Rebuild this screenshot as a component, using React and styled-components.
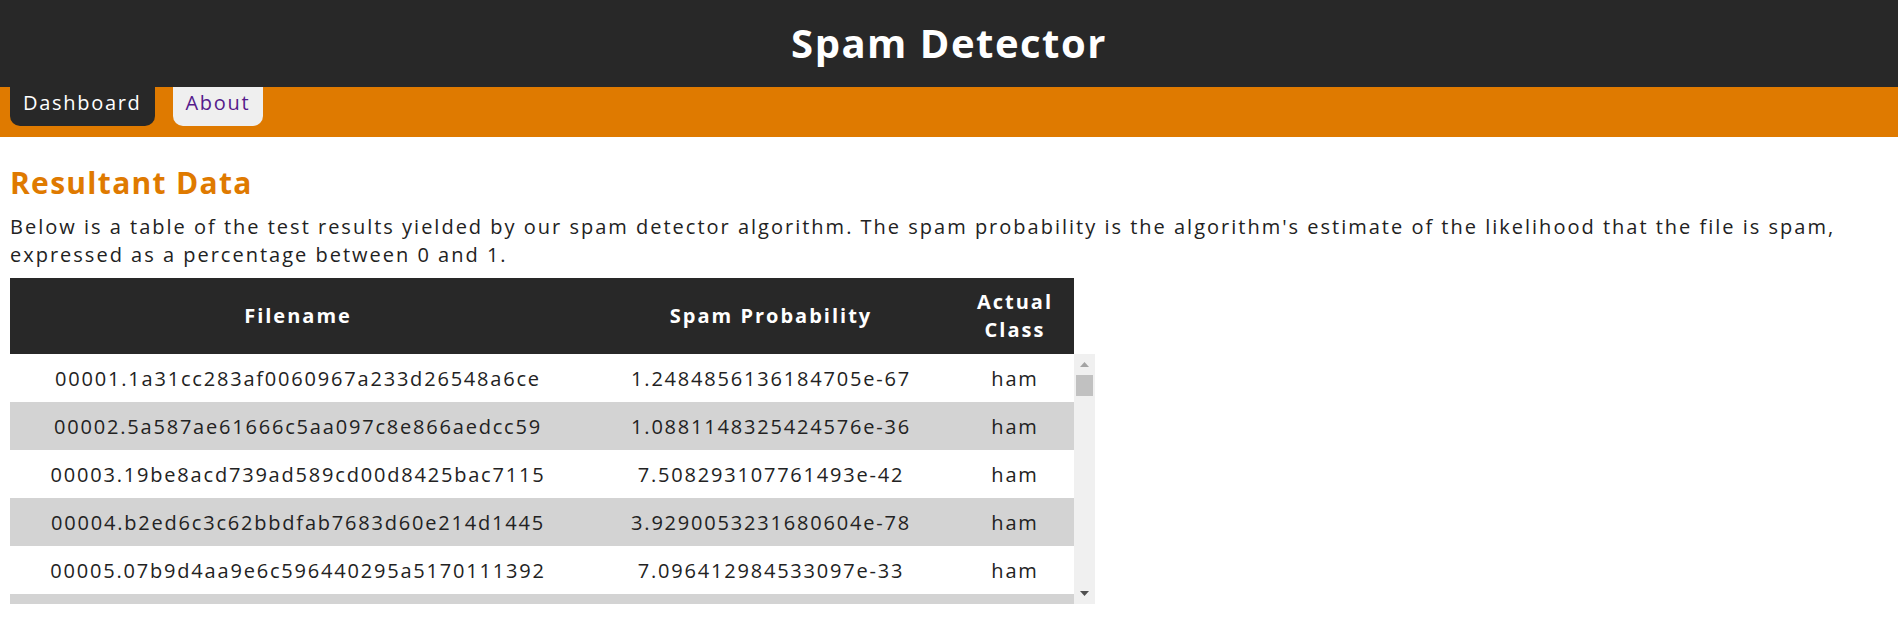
import React from "react";
import styled, { createGlobalStyle } from "styled-components";

const GlobalStyle = createGlobalStyle`
  html, body {
    margin: 0;
    padding: 0;
    background: #ffffff;
  }
  body {
    font-family: "Open Sans", "Noto Sans", "Liberation Sans", sans-serif;
    font-size: 20px;
    color: #222222;
  }
  * { box-sizing: border-box; }
`;

const ORANGE = "#df7a00";
const DARK = "#282828";

const Header = styled.header`
  height: 87px;
  background: ${DARK};
  display: flex;
  align-items: center;
  justify-content: center;
`;

const Title = styled.h1`
  margin: 0;
  font-size: 40px;
  font-weight: 700;
  letter-spacing: 1.5px;
  color: #ffffff;
  line-height: 1.362;
`;

const Nav = styled.nav`
  height: 50px;
  background: ${ORANGE};
  display: flex;
  align-items: flex-start;
  gap: 18px;
  padding-left: 10px;
`;

const Tab = styled.a`
  display: block;
  height: 39px;
  padding: 2px 13px 0 13px;
  line-height: 27px;
  font-size: 20px;
  letter-spacing: 1.7px;
  text-decoration: none;
  border-radius: 0 0 10px 10px;
  background: ${(p) => (p.$active ? DARK : "#efefef")};
  color: ${(p) => (p.$active ? "#ffffff" : "#551a8b")};
`;

const Main = styled.main`
  padding: 28px 10px 0 10px;
`;

const Heading = styled.h2`
  margin: 0 0 12px 0;
  font-size: 30px;
  line-height: 36px;
  font-weight: 700;
  letter-spacing: 1.3px;
  color: ${ORANGE};
`;

const Intro = styled.p`
  margin: 0 0 10px 0;
  font-size: 20px;
  line-height: 27.5px;
  letter-spacing: 2px;
  color: #222222;
`;

const COLS = "576px 370px 118px";

const Table = styled.div`
  width: 1085px;
`;

const HeadRow = styled.div`
  width: 1064px;
  display: grid;
  grid-template-columns: ${COLS};
  height: 76px;
  background: ${DARK};
`;

const HeadCell = styled.div`
  display: flex;
  align-items: center;
  justify-content: center;
  text-align: center;
  padding: 10px 12px;
  color: #ffffff;
  font-weight: 700;
  font-size: 20px;
  line-height: 28px;
  letter-spacing: 2px;
`;

const BodyWrap = styled.div`
  display: flex;
  height: 250px;
`;

const List = styled.div`
  width: 1064px;
  height: 250px;
  overflow-y: auto;
  scrollbar-width: none;
  &::-webkit-scrollbar {
    display: none;
  }
`;

const Row = styled.div`
  display: grid;
  grid-template-columns: ${COLS};
  height: 48px;
  padding-top: 1px;
  background: ${(p) => (p.$striped ? "#d3d3d3" : "#ffffff")};
`;

const Cell = styled.div`
  display: flex;
  align-items: center;
  justify-content: center;
  font-size: 20px;
  letter-spacing: 1.8px;
  color: #222222;
  white-space: nowrap;
`;

const ScrollBar = styled.div`
  width: 21px;
  height: 250px;
  background: #f0f0f0;
  display: flex;
  flex-direction: column;
`;

const ScrollButton = styled.div`
  height: 21px;
  display: flex;
  align-items: center;
  justify-content: center;
  color: ${(p) => (p.$disabled ? "#a3a3a3" : "#505050")};
`;

const Track = styled.div`
  flex: 1;
  padding: 0 2px;
`;

const Thumb = styled.div`
  height: 21px;
  background: #c1c1c1;
`;

const Arrow = ({ up }) => (
  <svg width="9" height="5" viewBox="0 0 9 5">
    <path d={up ? "M0 5 L4.5 0 L9 5 Z" : "M0 0 L4.5 5 L9 0 Z"} fill="currentColor" />
  </svg>
);

const baseRows = [
  ["00001.1a31cc283af0060967a233d26548a6ce", "1.2484856136184705e-67", "ham"],
  ["00002.5a587ae61666c5aa097c8e866aedcc59", "1.0881148325424576e-36", "ham"],
  ["00003.19be8acd739ad589cd00d8425bac7115", "7.508293107761493e-42", "ham"],
  ["00004.b2ed6c3c62bbdfab7683d60e214d1445", "3.9290053231680604e-78", "ham"],
  ["00005.07b9d4aa9e6c596440295a5170111392", "7.096412984533097e-33", "ham"],
];

function makeRows() {
  const rows = [...baseRows];
  let seed = 12345;
  const rand = () => {
    seed = (seed * 1103515245 + 12345) % 2147483648;
    return seed / 2147483648;
  };
  const hex = "0123456789abcdef";
  for (let i = 6; i <= 52; i++) {
    let h = "";
    for (let j = 0; j < 32; j++) h += hex[Math.floor(rand() * 16)];
    const num = String(i).padStart(5, "0");
    const mant = (1 + rand() * 8.9).toFixed(15);
    const exp = 20 + Math.floor(rand() * 70);
    rows.push([`${num}.${h}`, `${mant}e-${exp}`, "ham"]);
  }
  return rows;
}

const rows = makeRows();

export default function App() {
  return (
    <>
      <GlobalStyle />
      <Header>
        <Title>Spam Detector</Title>
      </Header>
      <Nav>
        <Tab href="#" $active>Dashboard</Tab>
        <Tab href="#">About</Tab>
      </Nav>
      <Main>
        <Heading>Resultant Data</Heading>
        <Intro>
          Below is a table of the test results yielded by our spam detector algorithm. The spam
          probability is the algorithm's estimate of the likelihood that the file is spam,
          expressed as a percentage between 0 and 1.
        </Intro>
        <Table>
          <HeadRow>
            <HeadCell>Filename</HeadCell>
            <HeadCell>Spam Probability</HeadCell>
            <HeadCell>Actual Class</HeadCell>
          </HeadRow>
          <BodyWrap>
            <List>
              {rows.map((r, i) => (
                <Row key={r[0]} $striped={i % 2 === 1}>
                  <Cell>{r[0]}</Cell>
                  <Cell>{r[1]}</Cell>
                  <Cell>{r[2]}</Cell>
                </Row>
              ))}
            </List>
            <ScrollBar aria-hidden="true">
              <ScrollButton $disabled>
                <Arrow up />
              </ScrollButton>
              <Track>
                <Thumb />
              </Track>
              <ScrollButton>
                <Arrow />
              </ScrollButton>
            </ScrollBar>
          </BodyWrap>
        </Table>
      </Main>
    </>
  );
}
